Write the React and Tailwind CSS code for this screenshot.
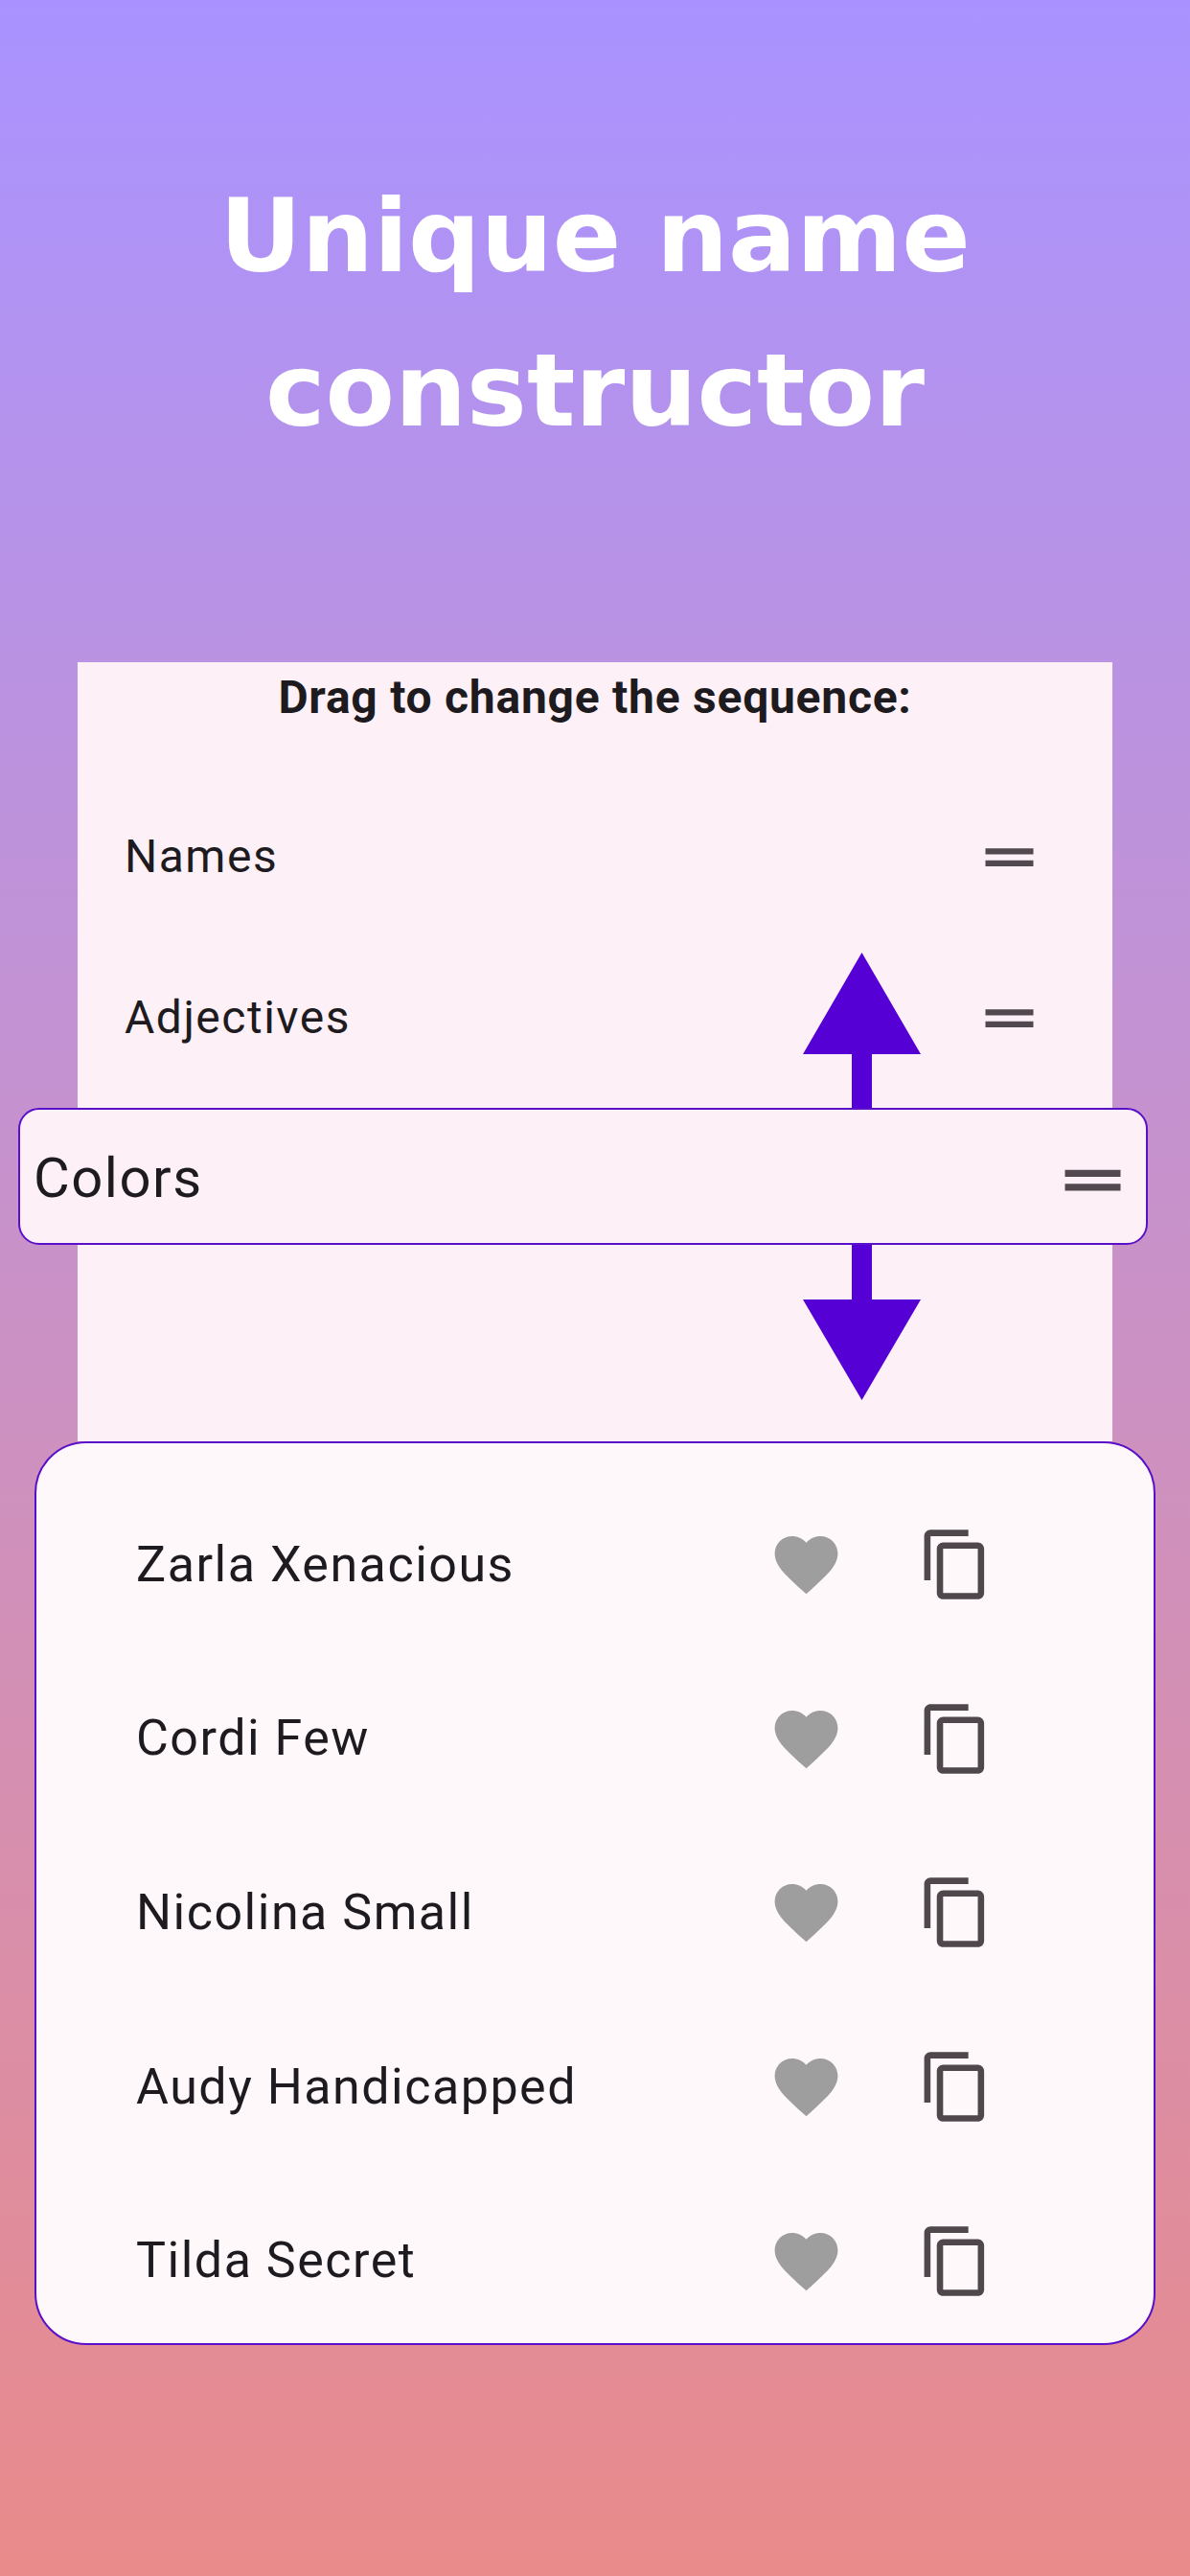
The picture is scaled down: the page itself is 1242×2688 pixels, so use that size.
const SEQUENCE = ['Names', 'Adjectives']

const RESULTS = ['Zarla Xenacious', 'Cordi Few', 'Nicolina Small', 'Audy Handicapped', 'Tilda Secret']

function DragHandle({ className }) {
  return (
    <svg viewBox="0 0 24 24" className={className} fill="#524850">
      <path d="M20 9H4v2h16V9zM4 15h16v-2H4v2z" />
    </svg>
  )
}

function MoveArrows() {
  return (
    <svg viewBox="0 0 123 467" className="absolute left-[757px] top-[303px] h-[467px] w-[123px]" fill="#5500d4">
      <path d="M61.5 0L123 106H72V240H51V106H0z" />
      <path d="M61.5 467L123 362H72V240H51V362H0z" />
    </svg>
  )
}

export default function App() {
  return (
    <div className="h-[2688px] w-[1242px] overflow-hidden bg-gradient-to-b from-[#a992ff] to-[#e98a8a] font-['Roboto',sans-serif]">
      {/* Title */}
      <div className="flex h-[691px] flex-col items-center pt-[166px]">
        <h1 className="text-center font-['DejaVu_Sans',sans-serif] text-[105.5px] font-bold leading-[161px] text-white">
          Unique name
          <br />
          constructor
        </h1>
      </div>

      {/* Sequence panel */}
      <div className="relative mx-[81px] h-[813px] bg-[#fdf0f7]">
        <p className="pt-[12px] text-center text-[48px] font-bold leading-[50px] tracking-[0.75px] text-[#1d1b20]">
          Drag to change the sequence:
        </p>
        <div className="pt-[57px]">
          {SEQUENCE.map(item => (
            <div key={item} className="flex h-[168px] items-center justify-between pl-[49px] pr-[70px]">
              <span className="text-[48px] tracking-[1.5px] text-[#1d1b20]">{item}</span>
              <DragHandle className="size-[75px]" />
            </div>
          ))}
        </div>
        <MoveArrows />
        {/* Item being dragged */}
        <div className="absolute left-[-62px] right-[-37px] top-[465px] flex h-[143px] items-center justify-between rounded-[22px] border-2 border-[#5a10c8] bg-[#fdf0f7] pl-[14px] pr-[12px]">
          <span className="pt-[3px] text-[58px] tracking-[1.5px] text-[#1d1b20]">Colors</span>
          <DragHandle className="mt-[7px] size-[87px]" />
        </div>
      </div>

      {/* Generated names */}
      <div className="relative mx-[36px] h-[943px] rounded-[54px] border-2 border-[#5a10c8] bg-[#fff8fb] pt-[36px]">
        {RESULTS.map(name => (
          <div key={name} className="flex h-[181.6px] items-center pl-[104px]">
            <span className="w-[660px] text-[52px] tracking-[1.5px] text-[#1d1b20]">{name}</span>
            <svg viewBox="0 0 24 24" className="size-[79px]" fill="#9e9e9e">
              <path d="M12 21.35l-1.45-1.32C5.4 15.36 2 12.28 2 8.5 2 5.42 4.42 3 7.5 3c1.74 0 3.41.81 4.5 2.09C13.09 3.81 14.76 3 16.5 3 19.58 3 22 5.42 22 8.5c0 3.78-3.4 6.86-8.55 11.54L12 21.35z" />
            </svg>
            <svg viewBox="0 0 24 24" className="ml-[77px] size-[79px]" fill="#4f474c">
              <path d="M16 1H4c-1.1 0-2 .9-2 2v14h2V3h12V1zm3 4H8c-1.1 0-2 .9-2 2v14c0 1.1.9 2 2 2h11c1.1 0 2-.9 2-2V7c0-1.1-.9-2-2-2zm0 16H8V7h11v14z" />
            </svg>
          </div>
        ))}
      </div>
    </div>
  )
}
